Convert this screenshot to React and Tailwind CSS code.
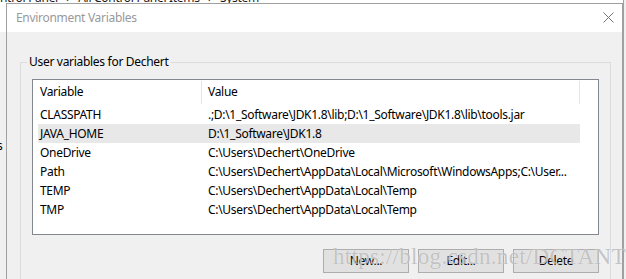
export default function App() {
  const rows = [
    ["CLASSPATH", ".;D:\\1_Software\\JDK1.8\\lib;D:\\1_Software\\JDK1.8\\lib\\tools.jar", false],
    ["JAVA_HOME", "D:\\1_Software\\JDK1.8", true],
    ["OneDrive", "C:\\Users\\Dechert\\OneDrive", false],
    ["Path", "C:\\Users\\Dechert\\AppData\\Local\\Microsoft\\WindowsApps;C:\\User...", false],
    ["TEMP", "C:\\Users\\Dechert\\AppData\\Local\\Temp", false],
    ["TMP", "C:\\Users\\Dechert\\AppData\\Local\\Temp", false],
  ];
  return (
    <div className="relative w-[626px] h-[279px] overflow-hidden bg-white font-['Noto_Sans',sans-serif] text-[12px] leading-[16px] tracking-[-0.3px] text-black">
      {/* background window */}
      <div className="absolute left-0 top-[-10px] whitespace-pre text-[12px] text-[#1a1a1a]">
        {"ntrol Panel   \u203A   All Control Panel Items   \u203A   System"}
      </div>
      <div className="absolute left-0 top-[32px] w-[6px] h-[250px] bg-[#f0f0f0]">
        <span className="absolute left-[-3px] top-[106px] text-black">s</span>
      </div>
      <div className="absolute right-0 top-0 w-[3px] h-[279px] bg-[#f0f0f0] border-l border-[#a0a0a0]" />

      {/* dialog */}
      <div className="absolute left-[6px] top-[3px] w-[617px] h-[300px] border border-[#a0a0a0] bg-[#f0f0f0] flex flex-col">
        <div className="h-[28px] bg-white flex items-center justify-between pl-[9px] pr-[8px] shrink-0">
          <span className="text-[#999999]">Environment Variables</span>
          <svg width="11" height="11" viewBox="0 0 11 11" className="mt-[-1px]">
            <path d="M0.5 0.5 L10.5 10.5 M10.5 0.5 L0.5 10.5" stroke="#777777" strokeWidth="1" fill="none" />
          </svg>
        </div>
        <div className="pl-[13px] pr-[11px] pt-[22px]">
          <fieldset className="border border-[#dcdcdc] h-[260px]">
            <legend className="ml-[6px] px-[2px] leading-[16px]">User variables for Dechert</legend>
            <div className="mx-[11px] mt-[9px] h-[156px] border border-[#828790] bg-white flex flex-col">
              <div className="h-[24px] flex items-stretch shrink-0">
                <div className="w-[168px] pl-[7px] flex items-center">Variable</div>
                <div className="w-[1px] mt-[1px] bg-[#e5e5e5]" />
                <div className="w-[377px] pl-[6px] flex items-center">Value</div>
                <div className="w-[1px] mt-[1px] bg-[#e5e5e5]" />
              </div>
              <div className="flex flex-col pt-[1px]">
                {rows.map(([k, v, sel]) => (
                  <div
                    key={k}
                    className={`ml-[5px] w-[542px] h-[19px] flex items-center whitespace-nowrap ${sel ? "bg-[#e8e8e8]" : ""}`}
                  >
                    <div className="w-[170px] pl-[2px]">{k}</div>
                    <div>{v}</div>
                  </div>
                ))}
              </div>
            </div>
            <div className="mr-[11px] mt-[14px] flex justify-end gap-[9px]">
              <button className="w-[86px] h-[24px] bg-[#e1e1e1] border border-[#adadad] text-black">New...</button>
              <button className="w-[86px] h-[24px] bg-[#e1e1e1] border border-[#adadad] text-black">Edit...</button>
              <button className="w-[86px] h-[24px] bg-[#e1e1e1] border border-[#adadad] text-black">Delete</button>
            </div>
          </fieldset>
        </div>
      </div>

      {/* watermark */}
      <div className="absolute left-[333px] top-[243px] whitespace-nowrap font-['Liberation_Serif',serif] text-[23px] leading-[28px] tracking-[0.3px] text-[rgba(140,140,140,0.5)] [text-shadow:0_0_1px_rgba(255,255,255,0.9)] pointer-events-none">
        https://blog.csdn.net/DCTANT
      </div>
    </div>
  );
}
